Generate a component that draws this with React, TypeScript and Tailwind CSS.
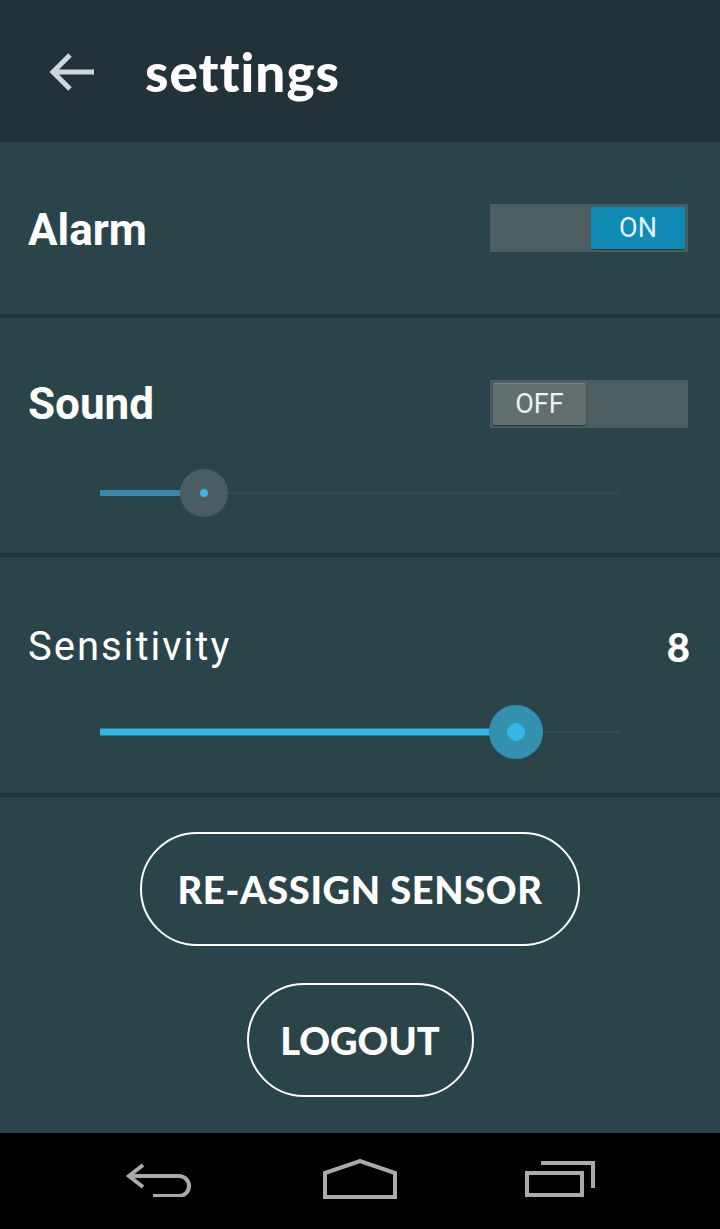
import React from "react";

function BackArrow() {
  return (
    <svg width="48" height="44" viewBox="0 0 48 44" fill="none">
      <path d="M46 22H5M22 5L5 22l17 17" stroke="#cfd6d8" strokeWidth="5" />
    </svg>
  );
}

function Toggle({ on }: { on: boolean }) {
  return (
    <div className="flex h-[48px] w-[198px] items-center bg-[#4c5e61] px-[3px]">
      {on ? (
        <>
          <div className="flex-1" />
          <div className="flex h-[42px] w-[94px] items-center justify-center rounded-[2px] bg-[#0f8bb6] text-[27px] text-[#e6f4f8] shadow-[0_1px_1px_rgba(0,0,0,0.4)]">
            ON
          </div>
        </>
      ) : (
        <>
          <div className="flex h-[42px] w-[93px] items-center justify-center rounded-[2px] border-t border-[#7b8586] bg-[#636e70] text-[27px] text-[#eef1f1] shadow-[0_1px_2px_rgba(0,0,0,0.5)]">
            OFF
          </div>
          <div className="flex-1" />
        </>
      )}
    </div>
  );
}

function Slider({
  pct,
  active,
  halo,
  haloSize,
  dotSize,
  trackH,
}: {
  pct: number;
  active: string;
  halo: string;
  haloSize: number;
  dotSize: number;
  trackH: number;
}) {
  return (
    <div className="relative mx-[100px] h-[56px]">
      <div className="absolute left-0 right-0 top-1/2 h-[1px] -translate-y-1/2 bg-[#3d555b]" />
      <div
        className="absolute left-0 top-1/2 -translate-y-1/2"
        style={{ width: `${pct}%`, height: trackH, background: active }}
      />
      <div
        className="absolute top-1/2 -translate-x-1/2 -translate-y-1/2 rounded-full"
        style={{ left: `${pct}%`, width: haloSize, height: haloSize, background: halo }}
      />
      <div
        className="absolute top-1/2 -translate-x-1/2 -translate-y-1/2 rounded-full bg-[#35b6e6]"
        style={{ left: `${pct}%`, width: dotSize, height: dotSize }}
      />
    </div>
  );
}

export default function App() {
  return (
    <div
      className="flex h-[1229px] w-[720px] flex-col bg-[#2b444a] text-white"
      style={{ fontFamily: "Roboto, 'Noto Sans', sans-serif" }}
    >
      <header className="flex h-[142px] shrink-0 items-center bg-[#22323a]">
        <div className="ml-[48px] mt-[2px] flex items-center">
          <BackArrow />
        </div>
        <h1
          className="ml-[49px] text-[53px] font-black leading-none tracking-[1px] text-white"
          style={{ fontFamily: "Lato, sans-serif" }}
        >
          settings
        </h1>
      </header>

      <section className="flex h-[172px] shrink-0 items-center justify-between pl-[28px] pr-[32px]">
        <span className="mt-[4px] text-[44px] font-bold">Alarm</span>
        <Toggle on />
      </section>
      <div className="h-[4px] shrink-0 bg-[#22333a]" />

      <section className="flex h-[235px] shrink-0 flex-col">
        <div className="mt-[53px] flex items-center justify-between pl-[28px] pr-[32px]">
          <span className="text-[44px] font-bold">Sound</span>
          <Toggle on={false} />
        </div>
        <div className="mt-[28px]">
          <Slider
            pct={20}
            active="#3589a9"
            halo="#4a5d62"
            haloSize={48}
            dotSize={8}
            trackH={6}
          />
        </div>
      </section>
      <div className="h-[4px] shrink-0 bg-[#22333a]" />

      <section className="flex h-[236px] shrink-0 flex-col">
        <div className="mt-[60px] flex items-center justify-between pl-[28px] pr-[30px]">
          <span className="text-[40px] tracking-[2px]">Sensitivity</span>
          <span
            className="text-[40px] font-black"
            style={{ fontFamily: "Lato, sans-serif" }}
          >
            8
          </span>
        </div>
        <div className="mt-[27px]">
          <Slider
            pct={80}
            active="#33b5e5"
            halo="#3490b1"
            haloSize={54}
            dotSize={18}
            trackH={7}
          />
        </div>
      </section>
      <div className="h-[4px] shrink-0 bg-[#22333a]" />

      <section
        className="flex flex-1 flex-col items-center gap-[37px] pt-[35px]"
        style={{ fontFamily: "Lato, sans-serif" }}
      >
        <button className="flex h-[114px] w-[440px] items-center justify-center rounded-full border-2 border-white text-[38px] font-black tracking-[0.6px] text-white">
          RE-ASSIGN SENSOR
        </button>
        <button className="flex h-[114px] w-[227px] items-center justify-center rounded-full border-2 border-white text-[38px] font-black text-white">
          LOGOUT
        </button>
      </section>

      <nav className="flex h-[96px] shrink-0 items-center justify-between bg-black px-[125px] pb-[4px]">
        <svg width="70" height="36" viewBox="0 0 70 36" fill="none">
          <path
            d="M18 4L4 15l14 11M4 15h50a10 10 0 0 1 0 20H28"
            stroke="#aaaaaa"
            strokeWidth="4"
          />
        </svg>
        <svg width="74" height="40" viewBox="0 0 74 40" fill="none">
          <path d="M2 38V14L37 2l35 12v24z" stroke="#aaaaaa" strokeWidth="4" />
        </svg>
        <svg width="70" height="36" viewBox="0 0 70 36" fill="none">
          <path d="M2 12h55v22H2zM16 2h52v25" stroke="#aaaaaa" strokeWidth="4" />
        </svg>
      </nav>
    </div>
  );
}
